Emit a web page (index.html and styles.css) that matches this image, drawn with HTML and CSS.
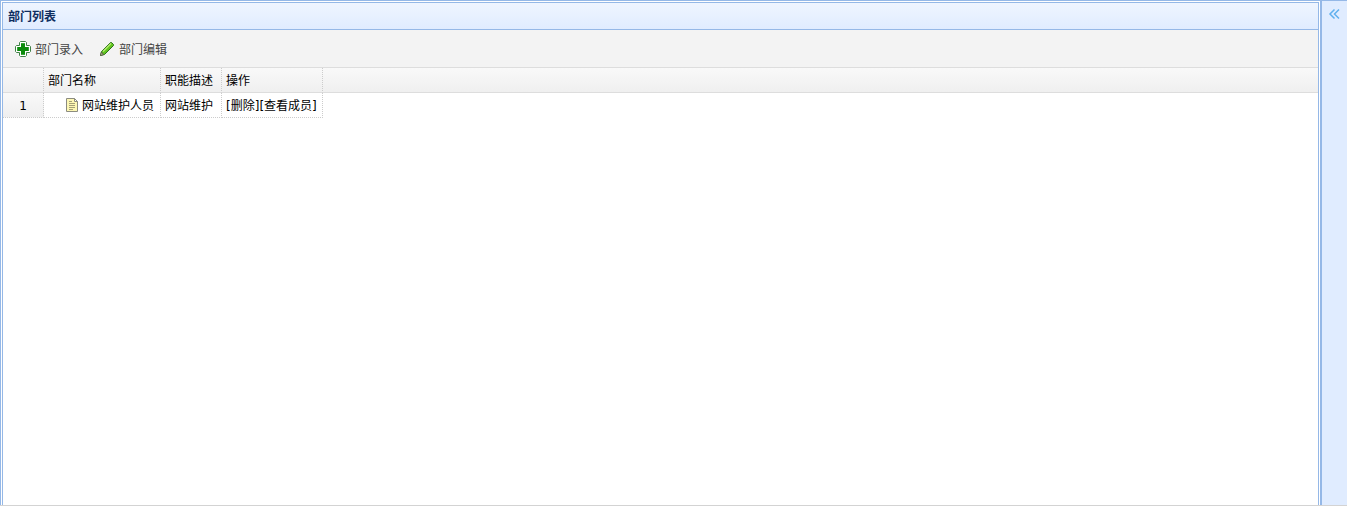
FILE: index.html
```html
<!DOCTYPE html>
<html lang="zh-CN">

<head>
    <meta charset="UTF-8">
    <meta name="viewport" content="width=device-width, initial-scale=1">
    <title>部门列表</title>
    <link rel="stylesheet" href="styles.css">
</head>

<body>
    <div class="layout">
        <main class="center">
            <section class="panel">
                <h1 class="panel-title">部门列表</h1>

                <div class="toolbar">
                    <button type="button" class="tool-btn">
                        <svg width="16" height="16" viewBox="0 0 16 16" aria-hidden="true">
                            <path d="M5.500 .5h5l1 1v3h3l1 1v5l-1 1h-3v3l-1 1h-5l-1-1v-3h-3l-1-1v-5l1-1h3v-3z" fill="#fff" stroke="#3f8045" />
                            <path d="M6 2h4v4h4v4h-4v4H6v-4H2V6h4z" fill="#35a535" />
                            <path d="M6 3h4v3h3v4h-3v3H6v-3H3V6h3z" fill="#0b8a0b" />
                        </svg>
                        <span>部门录入</span>
                    </button>
                    <button type="button" class="tool-btn">
                        <svg width="16" height="16" viewBox="0 0 16 16" aria-hidden="true">
                            <path d="M1.500 14.500l1-4 9-9h1l2 2v1l-9 9z" fill="#5fc41e" stroke="#2c6e1c" />
                            <path d="M4 10.500l8-8" stroke="#b5ea70" stroke-width="1.500" />
                            <path d="M1.500 14.500l1-3.500 2 2.500z" fill="#e8ddb0" stroke="#555f45" />
                        </svg>
                        <span>部门编辑</span>
                    </button>
                </div>

                <table class="grid">
                    <thead>
                        <tr>
                            <th class="col-num"></th>
                            <th class="col-name">部门名称</th>
                            <th class="col-desc">职能描述</th>
                            <th class="col-action">操作</th>
                            <th class="col-rest"></th>
                        </tr>
                    </thead>
                    <tbody>
                        <tr>
                            <td class="col-num">1</td>
                            <td class="col-name">
                                <div class="tree-node">
                                    <svg width="16" height="16" viewBox="0 0 16 16" aria-hidden="true">
                                        <path d="M2.500 .5h8l3 3v10h-11z" fill="#fdf7b4" stroke="#8c8c80" />
                                        <path d="M10.500 .5v3h3z" fill="#fff" stroke="#8c8c80" />
                                        <path d="M5 3.500h3M5 5.500h6M5 7.500h6M5 9.500h6M5 11.500h4" stroke="#a5a078" />
                                    </svg>
                                    <span>网站维护人员</span>
                                </div>
                            </td>
                            <td class="col-desc">网站维护</td>
                            <td class="col-action"><a href="#delete">[删除]</a><a href="#members">[查看成员]</a></td>
                            <td class="col-rest"></td>
                        </tr>
                    </tbody>
                </table>
            </section>
        </main>

        <aside class="east">
            <button type="button" class="expand-btn" aria-label="展开">
                <svg width="16" height="16" viewBox="0 0 16 16" aria-hidden="true">
                    <path d="M8.500 3.500L4 8l4.500 4.500M13 3.500L8.500 8l4.500 4.500" fill="none" stroke="#5fb0ee" stroke-width="1.500" />
                </svg>
            </button>
        </aside>
    </div>
</body>

</html>
```

FILE: styles.css
```css
* {
    box-sizing: border-box;
}

body {
    margin: 0;
    background-color: #fff;
    font-family: "DejaVu Sans", "Noto Sans CJK SC", sans-serif;
    font-size: 12px;
    line-height: 16px;
    color: #000;
}

.layout {
    display: flex;
    height: calc(100vh - 1px);
    border-top: 1px solid #95b8e7;
    border-bottom: 1px solid #d3d3d3;
}

.center {
    flex: 1;
    display: flex;
    padding: 1px 1px 0;
    border-left: 1px solid #95b8e7;
}

.panel {
    flex: 1;
    border: 1px solid #95b8e7;
    border-bottom: none;
}

.panel-title {
    margin: 0;
    padding: 6px 5px 4px;
    font-size: 12px;
    font-weight: bold;
    color: #0e2d5f;
    background: linear-gradient(to bottom, #eff5ff, #e0ecff);
    border-bottom: 1px solid #95b8e7;
}

.toolbar {
    display: flex;
    gap: 8px;
    padding: 6px 8px;
    background-color: #f3f3f3;
    border-bottom: 1px solid #ddd;
}

.tool-btn {
    display: flex;
    align-items: center;
    gap: 4px;
    height: 25px;
    padding: 0 4px;
    border: none;
    background: none;
    font: inherit;
    color: #444;
    cursor: pointer;
}

.tool-btn span {
    padding-top: 2px;
}

.grid {
    width: 100%;
    table-layout: fixed;
    border-collapse: separate;
    border-spacing: 0;
}

.grid thead {
    background: linear-gradient(to bottom, #f9f9f9, #efefef);
}

.grid th,
.grid td {
    height: 25px;
    padding: 2px 4px 0;
    font-weight: normal;
    text-align: left;
    white-space: nowrap;
    border-right: 1px dotted #ccc;
}

.grid th {
    border-bottom: 1px solid #ddd;
}

.grid td {
    border-bottom: 1px dotted #ccc;
}

.grid .col-num {
    width: 41px;
    text-align: center;
}

.grid td.col-num {
    background: linear-gradient(to bottom, #f9f9f9, #efefef);
}

.grid .col-name {
    width: 117px;
}

.grid .col-desc {
    width: 61px;
}

.grid .col-action {
    width: 101px;
}

.grid .col-rest {
    border-right: none;
}

.grid td.col-rest {
    border-bottom: none;
}

.grid a {
    color: #000;
    text-decoration: none;
}

.tree-node {
    display: flex;
    align-items: center;
    gap: 2px;
    padding-left: 16px;
}

.east {
    width: 27px;
    padding: 5px 4px;
    background-color: #e0ecff;
    border-left: 2px solid #95b8e7;
}

.expand-btn {
    display: block;
    padding: 0;
    border: none;
    background: none;
    cursor: pointer;
}
```
